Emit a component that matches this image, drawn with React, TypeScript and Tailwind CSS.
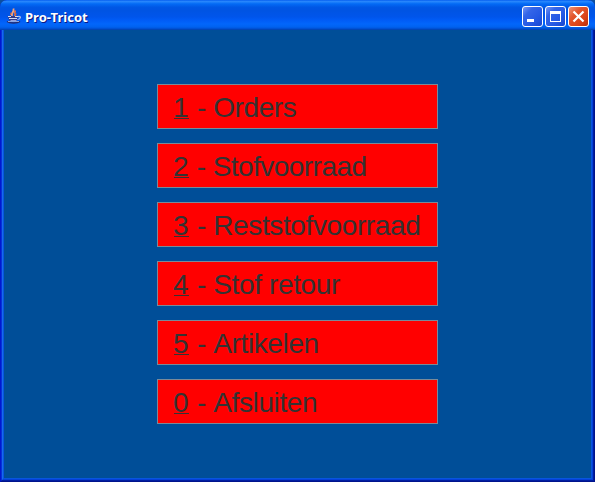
const items = [
  { key: "1", label: "Orders", spacing: "tracking-[-0.4px]" },
  { key: "2", label: "Stofvoorraad", spacing: "tracking-[-0.55px]" },
  { key: "3", label: "Reststofvoorraad", spacing: "tracking-[-0.38px]" },
  { key: "4", label: "Stof retour", spacing: "tracking-[-0.37px]" },
  { key: "5", label: "Artikelen", spacing: "tracking-[-0.38px]" },
  { key: "0", label: "Afsluiten", spacing: "tracking-[-0.38px]" },
];

function JavaIcon() {
  return (
    <svg className="h-4 w-4" viewBox="0 0 16 16" fill="none">
      <path d="M6.500 8C4 5.500 8.500 4.500 7.500 0.500" stroke="#f3a57e" strokeWidth="1.800" />
      <path d="M8.500 8C11 6 7 5.500 9.500 2.500" stroke="#ee7a45" strokeWidth="1.600" />
      <path d="M5 4.500L4.500 7M10 5L9.500 8" stroke="#d9602e" />
      <path d="M1.500 8H12L10.800 13H3.500Z" fill="#333a86" />
      <path d="M2 8.500H5M9 8.500H12M3 10.500H11" stroke="#d5dcf5" />
      <path d="M12 8.500C15.500 7.800 15 11 11.500 11.500" stroke="#b8c1e6" strokeWidth="1.200" />
      <path d="M4.500 12.500H10.500" stroke="#929fdd" />
      <path d="M1 13.500C4 15.500 11 15.500 14 13.500" stroke="#252b70" strokeWidth="1.500" />
      <path d="M2 13.500H13" stroke="#a9b5df" strokeWidth=".8" />
    </svg>
  );
}

const buttonBase =
  "flex h-[21px] w-[21px] items-center justify-center rounded-[3px] border border-white";
const blue = "bg-[linear-gradient(135deg,#7596f5_0%,#3465e8_28%,#2458e4_65%,#1746cf_100%)]";
const red = "bg-[linear-gradient(135deg,#ee9377_0%,#e3552c_35%,#da4318_70%,#b92c08_100%)]";

export default function App() {
  return (
    <div className="flex h-[482px] w-[595px] flex-col overflow-hidden bg-[#0c4f9e]">
      <div className="flex h-[482px] flex-col overflow-hidden rounded-t-[7px] bg-[#0019cf]">
        <header className="flex h-[30px] shrink-0 items-center bg-[linear-gradient(180deg,#0058ee_0%,#2a88fc_4%,#1f80fb_7%,#0f76f8_10%,#036af5_13%,#0262ee_18%,#0057e5_24%,#0054e3_35%,#0055eb_56%,#005bf5_66%,#0266fb_80%,#0062ef_90%,#0052d6_95%,#0040ab_100%)] pl-[6px] pr-[6px]">
          <div className="mt-[2px] shrink-0"><JavaIcon /></div>
          <h1 className="ml-[3px] mt-[3px] w-[80px] whitespace-nowrap font-['Noto_Sans','Open_Sans',sans-serif] text-[13px] font-bold leading-[18px] tracking-[0.03px] text-white [text-shadow:1px_1px_0_#0a1883]">
            Pro-Tricot
          </h1>
          <div className="ml-auto mt-[3px] flex gap-[2px]">
            <button aria-label="Minimize" className={`${buttonBase} ${blue}`}>
              <svg className="h-[19px] w-[19px]" viewBox="0 0 19 19"><path d="M4 12h7v3H4Z" fill="white" /></svg>
            </button>
            <button aria-label="Maximize" className={`${buttonBase} ${blue}`}>
              <svg className="h-[19px] w-[19px]" viewBox="0 0 19 19"><path fillRule="evenodd" d="M4 4h11v11H4ZM5 7h9v7H5Z" fill="white" /></svg>
            </button>
            <button aria-label="Close" className={`${buttonBase} ${red}`}>
              <svg className="h-[19px] w-[19px]" viewBox="0 0 19 19"><path d="M4.500 4.500l10 10M14.500 4.500l-10 10" stroke="white" strokeWidth="2.200" /></svg>
            </button>
          </div>
        </header>
        <div className="flex flex-1 border-x border-b border-l-[#0019cf] border-b-[#00138c] border-r-[#00138c]">
          <div className="flex flex-1 border-x border-b border-l-[#0831d9] border-b-[#001ea0] border-r-[#001ea0]">
            <div className="flex flex-1 border-x border-b border-l-[#166aee] border-b-[#0441d8] border-r-[#0441d8]">
              <div className="flex flex-1 border-x border-b border-l-[#0855dd] border-b-[#0855dd] border-r-[#0855dd]">
                <main className="flex flex-1 flex-col items-center gap-[14px] bg-[#004e98] pt-[54px]">
                  {items.map(({ key, label, spacing }) => (
                    <button
                      key={key}
                      className={`flex h-[45px] w-[281px] shrink-0 items-start whitespace-pre border border-[#7a8a99] bg-[#ff0000] pl-[16px] pt-[7px] text-left font-['Liberation_Sans',Arial,sans-serif] text-[28px] leading-[32px] text-[#333333] [font-kerning:none] ${spacing}`}
                    >
                      <span className="h-[27px] w-[15px] border-b border-[#333333] indent-[-1px]">{key}</span>
                      <span className="pl-[0.5px]">{` - ${label}`}</span>
                    </button>
                  ))}
                </main>
              </div>
            </div>
          </div>
        </div>
      </div>
    </div>
  );
}
